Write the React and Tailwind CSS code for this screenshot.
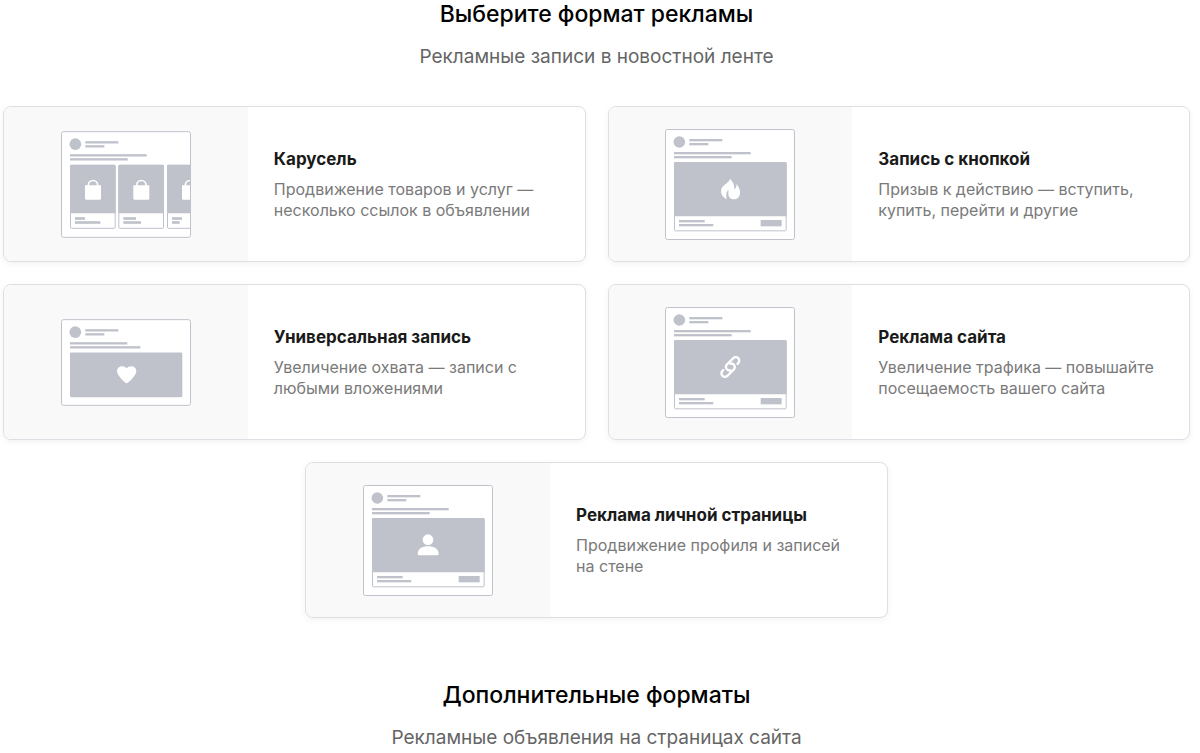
const formats = [
  {
    id: "carousel",
    title: "Карусель",
    text: "Продвижение товаров и услуг — несколько ссылок в объявлении",
    Preview: CarouselPreview,
  },
  {
    id: "button",
    title: "Запись с кнопкой",
    text: "Призыв к действию — вступить, купить, перейти и другие",
    Preview: ButtonPreview,
  },
  {
    id: "universal",
    title: "Универсальная запись",
    text: "Увеличение охвата — записи с любыми вложениями",
    Preview: UniversalPreview,
  },
  {
    id: "site",
    title: "Реклама сайта",
    text: "Увеличение трафика — повышайте посещаемость вашего сайта",
    Preview: SitePreview,
  },
  {
    id: "profile",
    title: "Реклама личной страницы",
    text: "Продвижение профиля и записей на стене",
    Preview: ProfilePreview,
  },
];

// Post frame with avatar and text lines, 3 units per pixel
function PostFrame({ height, lines = [230, 173], children }) {
  return (
    <>
      <rect x="1.5" y="1.5" width="387" height={height - 3} rx="6" fill="#fff" stroke="#bfc2cb" strokeWidth="3" />
      <g fill="#bfc2cb">
        <circle cx="43" cy="39" r="17.5" />
        <rect x="73" y="30" width="99" height="7" />
        <rect x="73" y="42" width="57" height="7" />
        <rect x="27" y="69" width={lines[0]} height="7" />
        <rect x="27" y="81" width={lines[1]} height="7" />
      </g>
      {children}
    </>
  );
}

function Bag({ x, y }) {
  return (
    <g transform={`translate(${x} ${y})`}>
      <path d="M0 16h48v40q0 4-4 4H4q-4 0-4-4z" fill="#fff" />
      <path d="M10 19v-3a14 14 0 0 1 28 0v3" fill="none" stroke="#fff" strokeWidth="5" />
    </g>
  );
}

function CarouselItem({ x, lines }) {
  return (
    <g transform={`translate(${x} 101)`}>
      <rect x="1.5" y="1.5" width="134" height="189" rx="3" fill="#fff" stroke="#bfc2cb" strokeWidth="3" />
      <path d="M4 0h129q4 0 4 4v141H0V4q0-4 4-4z" fill="#bfc2cb" />
      <Bag x={45} y={45} />
      <rect x="15" y="157" width={lines[0]} height="8" fill="#bfc2cb" />
      <rect x="15" y="169" width={lines[1]} height="8" fill="#bfc2cb" />
    </g>
  );
}

function CarouselPreview() {
  return (
    <svg width="130" height="107" viewBox="0 0 390 320" aria-hidden="true">
      <clipPath id="carousel-clip">
        <rect width="388" height="320" />
      </clipPath>
      <PostFrame height={320}>
        <g clipPath="url(#carousel-clip)">
          <CarouselItem x={27} lines={[30, 76]} />
          <CarouselItem x={172} lines={[38, 53]} />
          <CarouselItem x={318} lines={[30, 23]} />
        </g>
        <path d="M388.5 8v304" stroke="#bfc2cb" strokeWidth="3" />
      </PostFrame>
    </svg>
  );
}

function ActionPreview({ children }) {
  return (
    <svg width="130" height="111" viewBox="0 0 390 333" aria-hidden="true">
      <PostFrame height={333}>
        <rect x="28.5" y="100.5" width="335" height="205" rx="3" fill="#fff" stroke="#bfc2cb" strokeWidth="3" />
        <g fill="#bfc2cb">
          <path d="M31 99h330q4 0 4 4v159H27V103q0-4 4-4z" />
          <rect x="42" y="273" width="77" height="7" />
          <rect x="42" y="285" width="103" height="7" />
          <rect x="287" y="273" width="63" height="19" />
        </g>
        {children}
      </PostFrame>
    </svg>
  );
}

function ButtonPreview() {
  return (
    <ActionPreview>
      <path
        d="M195 149C203 158 210 168 207 181C212 179 215 173 215 165C222 174 226 184 225 193C224 204 217 211 208 211C197 211 190 204 190 195C190 190 191 187 190 183C184 188 182 198 185 210C175 206 168 197 168 186C168 168 192 164 195 149Z"
        fill="#fff"
      />
    </ActionPreview>
  );
}

function UniversalPreview() {
  return (
    <svg width="130" height="87" viewBox="0 0 390 260" aria-hidden="true">
      <PostFrame height={260} lines={[172, 211]}>
        <rect x="27" y="100" width="337" height="134" rx="4" fill="#bfc2cb" />
        <path
          d="M197 192C194 192 168 170 168 156C168 140 189 136 197 148C205 136 226 140 226 156C226 170 200 192 197 192Z"
          fill="#fff"
        />
      </PostFrame>
    </svg>
  );
}

function SitePreview() {
  return (
    <ActionPreview>
      <g
        transform="translate(196 180) rotate(-45)"
        fill="none"
        stroke="#fff"
        strokeWidth="7"
        strokeLinecap="round"
      >
        <path d="M22 8.5H25A10.5 10.5 0 0 0 25 -12.5H-3A10.5 10.5 0 0 0 -7 7" />
        <path d="M-22 -8.5H-25A10.5 10.5 0 0 0 -25 12.5H3A10.5 10.5 0 0 0 7 -7" />
      </g>
    </ActionPreview>
  );
}

function ProfilePreview() {
  return (
    <ActionPreview>
      <g fill="#fff">
        <circle cx="195" cy="164" r="16" />
        <path d="M164 207c0-16 14-23 31-23s32 7 32 23q0 4-4 4h-55q-4 0-4-4z" />
      </g>
    </ActionPreview>
  );
}

function SectionHeader({ title, subtitle }) {
  return (
    <header className="text-center">
      <h2 className="text-[23px] leading-7 font-medium text-black">{title}</h2>
      <p className="mt-[15px] text-[19px] leading-7 text-[#656565]">{subtitle}</p>
    </header>
  );
}

function FormatCard({ title, text, Preview }) {
  return (
    <a
      href="#"
      className="flex min-h-[156px] w-[calc(50%-11px)] overflow-hidden rounded-lg border border-[#dce0e4] bg-white shadow-[0_2px_6px_rgba(0,0,0,0.05)]"
    >
      <div className="flex w-[42%] shrink-0 items-center justify-center bg-[#f9f9f9]">
        <Preview />
      </div>
      <div className="flex flex-1 flex-col justify-center px-[26px]">
        <h3 className="text-[17px] leading-6 font-bold text-[#1a1a1a]">{title}</h3>
        <p className="mt-2 text-base leading-[21px] text-[#7a7a7a]">{text}</p>
      </div>
    </a>
  );
}

export default function App() {
  return (
    <main className="bg-white pr-[10px] pl-[3px] font-['Inter',sans-serif]">
      <SectionHeader title="Выберите формат рекламы" subtitle="Рекламные записи в новостной ленте" />
      <div className="mt-[35px] flex flex-wrap justify-center gap-[22px]">
        {formats.map((format) => (
          <FormatCard key={format.id} {...format} />
        ))}
      </div>
      <div className="mt-[63px]">
        <SectionHeader title="Дополнительные форматы" subtitle="Рекламные объявления на страницах сайта" />
      </div>
    </main>
  );
}
